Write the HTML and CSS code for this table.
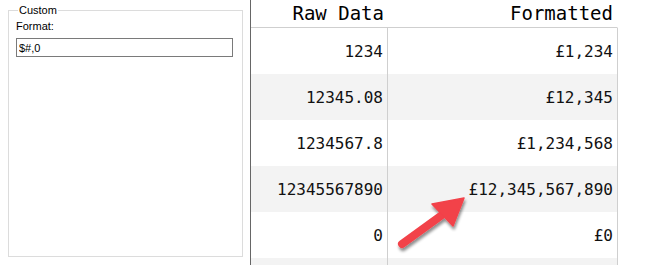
FILE: index.html
```html
<!DOCTYPE html>
<html>
<head>
<meta charset="utf-8">
<link rel="stylesheet" href="styles.css">
</head>
<body>
<div class="app">
  <div class="side">
    <fieldset class="group">
      <legend class="group-title">Custom</legend>
      <label class="field-label" for="fmt">Format:</label>
      <input id="fmt" class="field-input" type="text" value="$#,0">
    </fieldset>
  </div>
  <div class="grid-wrap">
    <div class="grid">
      <div class="cell head">Raw Data</div>
      <div class="cell head">Formatted</div>
      <div class="cell">1234</div>
      <div class="cell">£1,234</div>
      <div class="cell alt">12345.08</div>
      <div class="cell alt">£12,345</div>
      <div class="cell">1234567.8</div>
      <div class="cell">£1,234,568</div>
      <div class="cell alt">12345567890</div>
      <div class="cell alt">£12,345,567,890</div>
      <div class="cell">0</div>
      <div class="cell">£0</div>
      <div class="cell alt"></div>
      <div class="cell alt"></div>
    </div>
    <svg class="pointer" width="90" height="70" viewBox="0 0 90 70">
      <defs>
        <filter id="drop" x="-30%" y="-30%" width="160%" height="160%">
          <feGaussianBlur in="SourceAlpha" stdDeviation="1.6"/>
          <feOffset dx="1" dy="2.5" result="b"/>
          <feComponentTransfer><feFuncA type="linear" slope="0.45"/></feComponentTransfer>
          <feMerge><feMergeNode/><feMergeNode in="SourceGraphic"/></feMerge>
        </filter>
      </defs>
      <g filter="url(#drop)">
        <line x1="12" y1="54" x2="52" y2="25" stroke="#f2424a" stroke-width="8" stroke-linecap="round"/>
        <polygon points="74,8 42,14 63,36" fill="#f2424a" stroke="#f2424a" stroke-width="1.5" stroke-linejoin="round"/>
      </g>
    </svg>
  </div>
</div>
</body>
</html>
```

FILE: styles.css
```css
html, body {
  margin: 0;
  padding: 0;
  background: #ffffff;
}

.app {
  display: flex;
  width: 648px;
  height: 265px;
  overflow: hidden;
}

.side {
  width: 250px;
  flex: none;
  padding: 4px 0 0 8px;
  box-sizing: border-box;
}

.group {
  margin: 0;
  width: 235px;
  height: 253px;
  box-sizing: border-box;
  border: 1px solid #dcdcdc;
  padding: 3px 9px 0 7px;
  display: flex;
  flex-direction: column;
  font-family: "Liberation Sans", Arial, sans-serif;
  font-size: 11px;
  color: #000;
}

.group-title {
  padding: 0 1px;
  margin-left: 2px;
  line-height: 12px;
}

.field-label {
  line-height: 13px;
  margin-top: 1px;
}

.field-input {
  margin-top: 5px;
  width: 100%;
  height: 19px;
  box-sizing: border-box;
  border: 1px solid #7a7a7a;
  padding: 0 2px;
  font-family: "Liberation Sans", Arial, sans-serif;
  font-size: 11px;
  color: #000;
  outline: none;
}

.grid-wrap {
  position: relative;
  flex: none;
  width: 398px;
  border-left: 1px solid #666666;
}

.grid {
  display: grid;
  grid-template-columns: 137px 230px;
  grid-template-rows: 28px repeat(6, 46px);
  font-family: "DejaVu Sans Mono", monospace;
  font-size: 16px;
  color: #111;
}

.cell {
  display: flex;
  align-items: center;
  justify-content: flex-end;
  padding-right: 4px;
  border-right: 1px solid #cfcfcf;
  background: #ffffff;
}

.cell.alt {
  background: #f3f3f3;
}

.cell.head {
  font-size: 19px;
  align-items: flex-end;
  padding-bottom: 3px;
  border-bottom: 1px solid #cfcfcf;
  border-right: none;
  color: #000;
}

.cell.head:nth-child(2) {
  border-right: 1px solid transparent;
}

.pointer {
  position: absolute;
  left: 139px;
  top: 190px;
}
```
